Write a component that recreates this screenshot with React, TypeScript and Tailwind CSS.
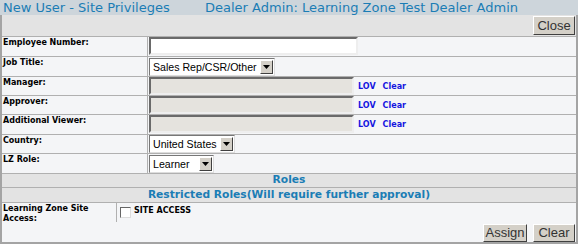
import { ReactNode } from 'react';

const label = "font-['DejaVu_Sans',sans-serif] text-[8px] font-bold leading-[10px] text-black";

function Btn({ children, className = '' }: { children: ReactNode; className?: string }) {
  return (
    <div
      className={`flex items-center justify-center bg-[#d4d0c8] border border-t-white border-l-white border-b-[#404040] border-r-[#404040] font-['Liberation_Sans',sans-serif] text-[13px] text-[#333] ${className}`}
    >
      {children}
    </div>
  );
}

function Select({ value, pad }: { value: string; pad: string }) {
  return (
    <div className="flex h-[18px] w-fit items-stretch border border-t-[#777] border-l-[#777] border-b-[#ddd] border-r-[#ddd] bg-white">
      <div className={`pl-[3px] font-['Liberation_Sans',sans-serif] text-[10.6px] leading-[16px] text-black whitespace-nowrap ${pad}`}>
        {value}
      </div>
      <div className="m-px flex w-[13px] items-center justify-center bg-[#d4d0c8] border border-t-white border-l-white border-b-[#404040] border-r-[#404040]">
        <svg width="7" height="4" viewBox="0 0 7 4">
          <path d="M0 0h7L3.5 4z" fill="#000" />
        </svg>
      </div>
    </div>
  );
}

function TextBox({ disabled = false, width }: { disabled?: boolean; width: string }) {
  return (
    <div
      className={`h-[18px] border-2 border-t-[#6a6a6a] border-l-[#6a6a6a] border-b-[#eeeeee] border-r-[#eeeeee] ${width} ${disabled ? 'bg-[#e5e3de]' : 'bg-white'}`}
    />
  );
}

function Row({ name, h, children }: { name: string; h: string; children?: ReactNode }) {
  return (
    <div className={`grid grid-cols-[145px_1fr] gap-px ${h}`}>
      <div className={`bg-[#f4f5f7] pl-px pt-px ${label}`}>{name}</div>
      <div className="bg-[#f4f5f7] pl-px">{children}</div>
    </div>
  );
}

function Lookup() {
  return (
    <div className="flex items-end">
      <TextBox disabled width="w-[205px]" />
      <span className="ml-[4px] mb-[2px] font-['DejaVu_Sans',sans-serif] text-[8px] font-bold text-[#1515e0]">LOV</span>
      <span className="ml-[7px] mb-[2px] font-['DejaVu_Sans',sans-serif] text-[8px] font-bold text-[#1515e0]">Clear</span>
    </div>
  );
}

export default function App() {
  return (
    <div className="w-[578px] h-[244px] bg-[#cdd5db] overflow-hidden">
      <div className="flex h-[15px] items-center font-['DejaVu_Sans',sans-serif] text-[13px] leading-[15px] text-[#1b7db5] whitespace-nowrap">
        <span className="pl-[3px] w-[205px]">New User - Site Privileges</span>
        <span>Dealer Admin: Learning Zone Test Dealer Admin</span>
      </div>
      <div className="flex flex-col gap-px border-x-2 border-b-2 border-[#a4a4a4] bg-[#b0b0b0]">
        <div className="flex h-[21px] justify-end bg-[#e3e3e3] pt-px pr-px">
          <Btn className="h-[19px] w-[42px]">Close</Btn>
        </div>
        <Row name="Employee Number:" h="h-[19px]">
          <TextBox width="w-[209px]" />
        </Row>
        <Row name="Job Title:" h="h-[19px]">
          <div className="pt-px">
            <Select value="Sales Rep/CSR/Other" pad="pr-[2px]" />
          </div>
        </Row>
        <Row name="Manager:" h="h-[18px]">
          <Lookup />
        </Row>
        <Row name="Approver:" h="h-[18px]">
          <Lookup />
        </Row>
        <Row name="Additional Viewer:" h="h-[19px]">
          <Lookup />
        </Row>
        <Row name="Country:" h="h-[18px]">
          <Select value="United States" pad="pr-[2px]" />
        </Row>
        <Row name="LZ Role:" h="h-[19px]">
          <div className="pt-px">
            <Select value="Learner" pad="pr-[8px]" />
          </div>
        </Row>
        <div className="flex h-[13px] items-center justify-center bg-[#e3e3e3] font-['DejaVu_Sans',sans-serif] text-[10.7px] font-bold text-[#1b7db5]">
          Roles
        </div>
        <div className="flex h-[14px] items-center justify-center bg-[#e3e3e3] font-['DejaVu_Sans',sans-serif] text-[10.7px] font-bold text-[#1b7db5]">
          Restricted Roles(Will require further approval)
        </div>
        <div className="grid h-[18px] grid-cols-[114px_1fr] gap-px">
          <div className={`bg-[#f4f5f7] pl-px pt-px ${label}`}>
            Learning Zone Site
            <br />
            Access:
          </div>
          <div className="flex items-start gap-[3px] bg-[#f4f5f7] pl-[3px] pt-[3px]">
            <div className="mt-px h-[11px] w-[11px] border border-t-[#666] border-l-[#666] border-b-[#ddd] border-r-[#ddd] bg-white" />
            <span className={label}>SITE ACCESS</span>
          </div>
        </div>
        <div className="flex h-[20px] items-end justify-end gap-[6px] bg-[#f4f5f7] pr-px">
          <Btn className="h-[18px] w-[44px]">Assign</Btn>
          <Btn className="h-[18px] w-[42px]">Clear</Btn>
        </div>
      </div>
    </div>
  );
}
